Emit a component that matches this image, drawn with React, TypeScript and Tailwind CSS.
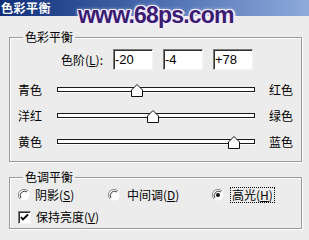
const sliders = [
  { left: "青色", right: "红色", value: -20 },
  { left: "洋红", right: "绿色", value: -4 },
  { left: "黄色", right: "蓝色", value: 78 },
];

const levels = ["-20", "-4", "+78"];

function Thumb({ value }: { value: number }) {
  const x = ((value + 100) / 200) * 198;
  return (
    <svg
      width="12"
      height="13"
      viewBox="0 0 12 13"
      className="absolute top-[-4px]"
      style={{ left: x - 6 }}
    >
      <polygon
        points="0.5,6 6,0.5 11.5,6 11.5,12.5 0.5,12.5"
        fill="#fff"
        stroke="#111"
        strokeWidth="1"
      />
    </svg>
  );
}

function Radio({ checked }: { checked?: boolean }) {
  return (
    <svg width="12" height="12" viewBox="0 0 12 12" className="shrink-0">
      <circle cx="6" cy="6" r="5.5" fill="#fff" />
      <path d="M10 2 A5.5 5.5 0 0 0 2 10" fill="none" stroke="#8a8a8a" strokeWidth="1" />
      <path d="M9 3 A4.3 4.3 0 0 0 3 9" fill="none" stroke="#404040" strokeWidth="1" />
      {checked && <circle cx="6" cy="6" r="2" fill="#111" />}
    </svg>
  );
}

export default function App() {
  return (
    <div className="relative w-[309px] h-[240px] overflow-hidden bg-[#ececec] font-['Noto_Sans_CJK_SC',sans-serif] text-[12px] leading-[14px] text-black">
      {/* title bar */}
      <div className="h-[16px] bg-gradient-to-r from-[#10307a] via-[#4a6cae] to-[#8eaadb] flex items-center pl-[1px]">
        <span className="text-white font-bold text-[12px] leading-[14px] tracking-[0.5px]">色彩平衡</span>
      </div>

      {/* watermark */}
      <div className="absolute left-[78px] top-[2px] font-['Liberation_Sans',sans-serif] font-black text-[23px] leading-[27px] tracking-[-0.8px] text-[#3a1c70] [text-shadow:1px_1px_0_#f3ecff,-1px_-1px_0_#f3ecff,1px_-1px_0_#f3ecff,-1px_1px_0_#f3ecff,0_2px_0_#f3ecff,2px_0_0_#f3ecff,0_0_4px_#fff]">
        www.68ps.com
      </div>

      {/* 色彩平衡 group */}
      <fieldset className="ml-[9px] mt-[14px] w-[293px] border border-[#9a9a9a] shadow-[inset_1px_1px_0_#fff,1px_1px_0_#fff] p-0 pb-[9px]">
        <legend className="ml-[13px] px-[2px]">色彩平衡</legend>

        <div className="flex items-center mt-[5px] h-[21px]">
          <span className="w-[93px] text-right">
            色阶(<u>L</u>):
          </span>
          {levels.map((v, i) => (
            <div
              key={i}
              className="ml-[10px] w-[40px] h-[21px] bg-white border border-t-[#7a7a7a] border-l-[#7a7a7a] border-b-[#f4f4f4] border-r-[#f4f4f4] shadow-[inset_1px_1px_0_#303030] pl-[1px] flex items-center font-['Liberation_Sans',sans-serif] text-[13px]"
            >
              {v}
            </div>
          ))}
        </div>

        <div className="flex flex-col gap-[5px] mt-[9px]">
          {sliders.map((s) => (
            <div key={s.left} className="flex items-center h-[21px] pl-[8px]">
              <span className="w-[39px]">{s.left}</span>
              <div className="relative w-[198px] h-[5px] bg-white border border-[#1a1a1a] shadow-[0_1px_0_#fff]">
                <Thumb value={s.value} />
              </div>
              <span className="ml-[14px]">{s.right}</span>
            </div>
          ))}
        </div>
      </fieldset>

      {/* 色调平衡 group */}
      <fieldset className="ml-[9px] mt-[8px] w-[293px] border border-[#9a9a9a] shadow-[inset_1px_1px_0_#fff,1px_1px_0_#fff] p-0 pb-[3px]">
        <legend className="ml-[13px] px-[2px]">色调平衡</legend>

        <div className="flex items-center h-[16px] mt-[3px] pl-[8px]">
          <div className="w-[90px] flex items-center gap-[5px]">
            <Radio />
            <span>
              阴影(<u>S</u>)
            </span>
          </div>
          <div className="w-[104px] flex items-center gap-[7px]">
            <Radio />
            <span>
              中间调(<u>D</u>)
            </span>
          </div>
          <div className="flex items-center gap-[6px]">
            <Radio checked />
            <span className="border border-dotted border-black px-[1px]">
              高光(<u>H</u>)
            </span>
          </div>
        </div>

        <div className="flex items-center h-[16px] mt-[6px] pl-[8px] gap-[5px]">
          <div className="w-[13px] h-[13px] bg-white border border-t-[#7a7a7a] border-l-[#7a7a7a] border-b-[#f4f4f4] border-r-[#f4f4f4] shadow-[inset_1px_1px_0_#303030] flex items-center justify-center">
            <svg width="9" height="9" viewBox="0 0 9 9">
              <path d="M1 4 L3 6.5 L8 1.5" fill="none" stroke="#000" strokeWidth="1.8" />
            </svg>
          </div>
          <span>
            保持亮度(<u>V</u>)
          </span>
        </div>
      </fieldset>
    </div>
  );
}
